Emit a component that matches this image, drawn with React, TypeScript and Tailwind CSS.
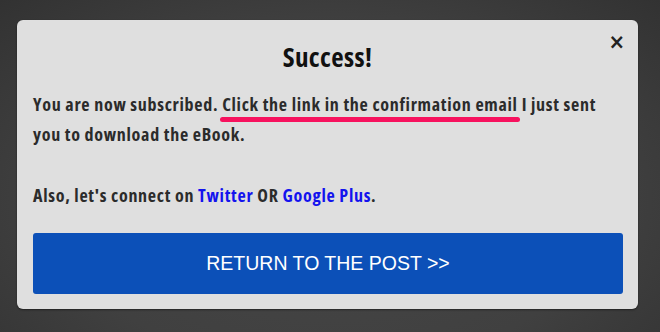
import React from 'react';

const App: React.FC = () => {
  return (
    <div className="w-[660px] h-[332px] overflow-hidden bg-[radial-gradient(ellipse_at_50%_60%,#474747,#404040_60%,#323232)] pt-[20px] pl-[17px]">
      {/* Popup */}
      <div className="relative w-[621px] h-[289px] rounded-[6px] bg-[#dfdfdf] shadow-[0_1px_2px_rgba(0,0,0,0.45)] px-[16px] pt-[19px] font-['Open_Sans',sans-serif] font-stretch-condensed">
        <button className="absolute top-[11px] right-[13px] h-[22px] text-[#222] text-[22px] leading-[22px] font-bold font-['DejaVu_Sans',sans-serif]">
          ×
        </button>

        <h2 className="text-center text-[27px] leading-[36px] font-bold text-[#111] tracking-[0.4px]">Success!</h2>

        <p className="mt-[14px] text-[18px] leading-[30px] font-bold text-[#2b2b2b] tracking-[0.7px]">
          You are now subscribed.{' '}
          <span className="relative">
            Click the link in the confirmation email
            {/* hand-drawn highlight stroke */}
            <span className="absolute left-[-2px] right-[-2px] bottom-[-6px] h-[5px] rounded-full bg-[#f7125e]" />
          </span>{' '}
          I just sent you to download the eBook.
        </p>

        <p className="mt-[31px] text-[18px] leading-[30px] font-bold text-[#2b2b2b] tracking-[0.7px]">
          Also, let's connect on <span className="text-[#1313ee]">Twitter</span> OR{' '}
          <span className="text-[#1313ee]">Google Plus</span>.
        </p>

        <button className="mt-[23px] w-[590px] h-[61px] rounded-[3px] bg-[#0c50b8] text-white text-[19.5px] font-['Liberation_Sans',Arial,sans-serif] font-normal [font-stretch:normal]">
          RETURN TO THE POST &gt;&gt;
        </button>
      </div>
    </div>
  );
};

export default App;
